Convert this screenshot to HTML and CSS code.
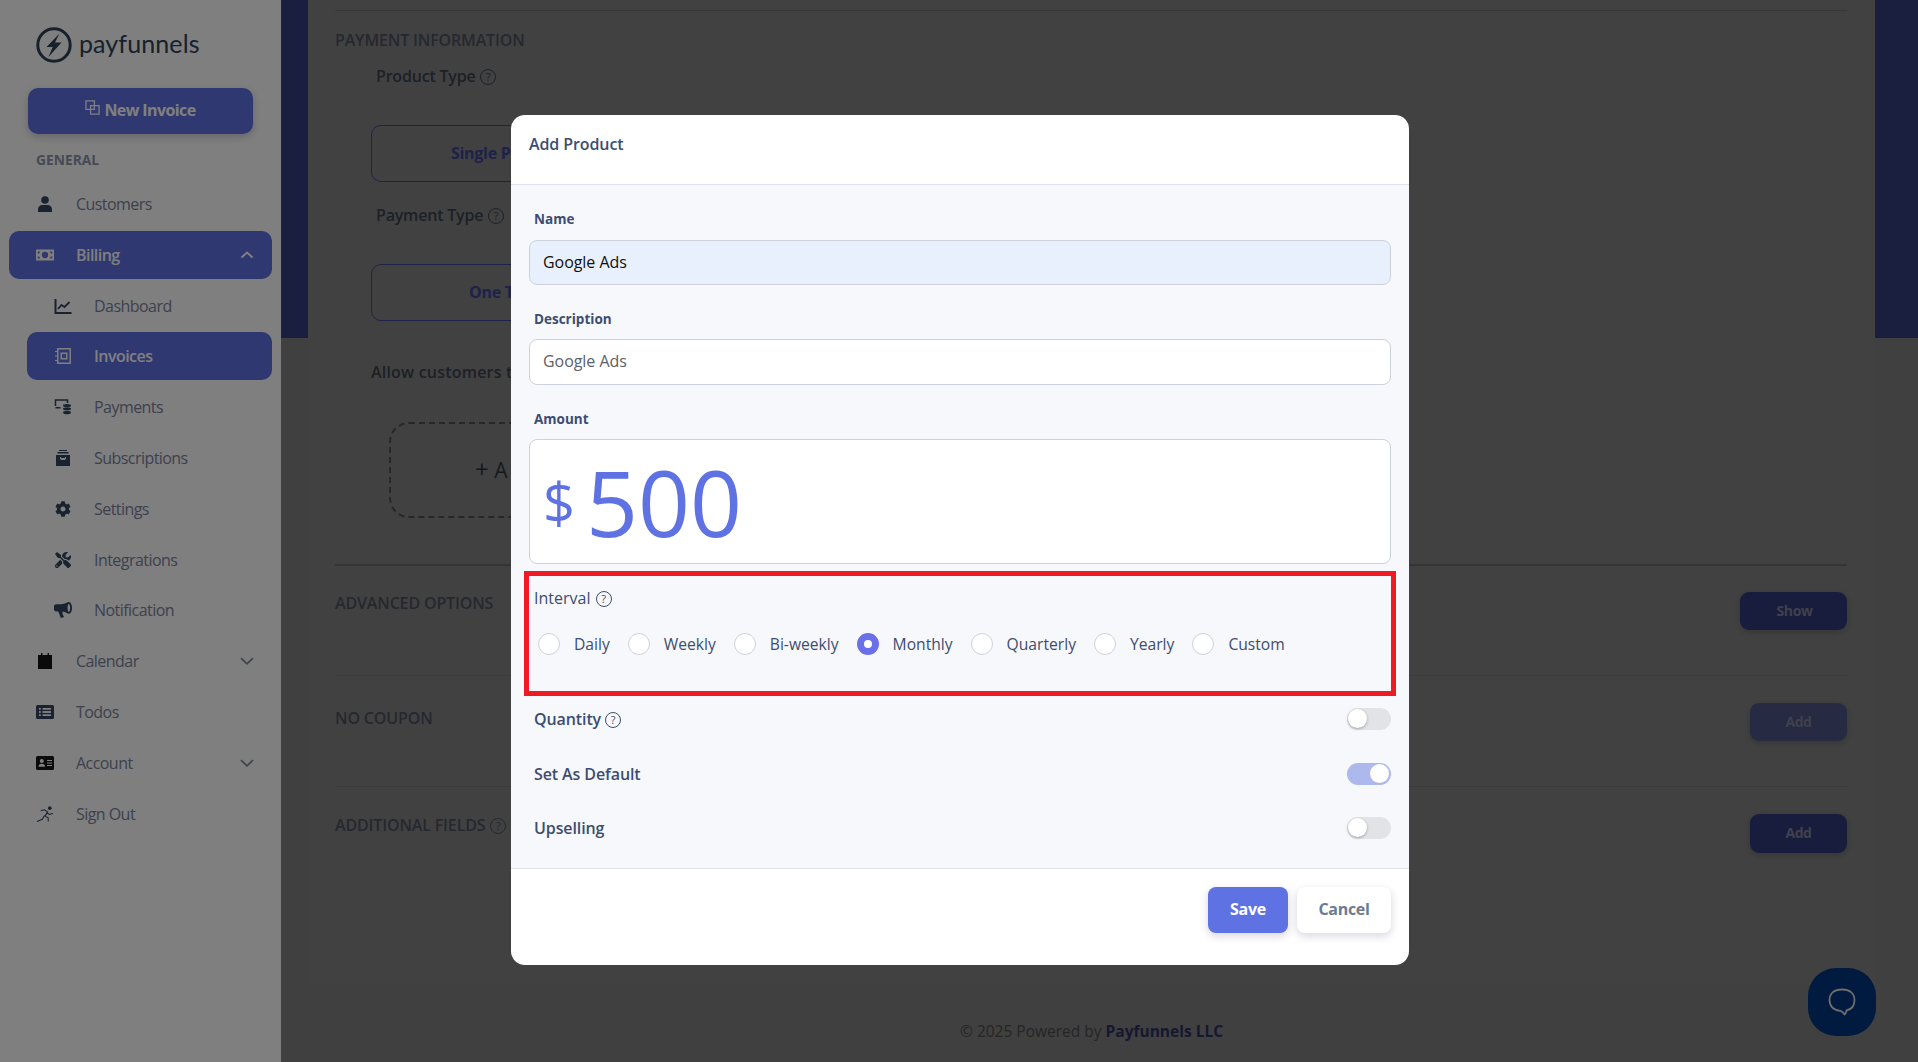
FILE: index.html
```html
<!DOCTYPE html>
<html lang="en">
<head>
    <meta charset="UTF-8">
    <title>Payfunnels - New Invoice</title>
    <link rel="stylesheet" href="styles.css">
</head>
<body>
<div class="page">
    <!-- left menu -->
    <aside class="sidebar">
        <div class="logo">
            <svg class="logo-mark" viewBox="0 0 36 36"><circle cx="18" cy="18" r="16.2" fill="none" stroke="#2c4258" stroke-width="3"/><path d="M23.5 6.5 10.5 20h6.2l-4.2 10 13-14.5h-6.5z" fill="#2c4258"/></svg>
            <span>payfunnels</span>
        </div>
        <button type="button" class="new-btn">
            <svg viewBox="0 0 16 16"><path d="M1 1h9v9H1zM6 6h9v9H6z" fill="none" stroke="#fff" stroke-width="1.4"/></svg>
            New Invoice
        </button>
        <div class="nav-title">GENERAL</div>
        <ul class="nav">
            <li class="nav-item">
                <svg class="ico" viewBox="0 0 16 16"><circle cx="8" cy="4" r="3.8"/><path d="M1 16v-2.5C1 10.500 3 9 5 9h6c2 0 4 1.500 4 4.500V16z"/></svg>
                <span>Customers</span>
            </li>
            <li class="nav-item active">
                <svg class="ico" viewBox="0 0 20 14"><path fill-rule="evenodd" d="M0 1h20v12H0zM10 3.500a3.500 3.500 0 1 0 0 7 3.500 3.500 0 0 0 0-7zM2 3v2.500A2.500 2.500 0 0 0 4.500 3zM2 11h2.500A2.500 2.500 0 0 0 2 8.500zM18 3h-2.500A2.500 2.500 0 0 0 18 5.500zM18 11V8.500A2.500 2.500 0 0 0 15.500 11z" fill="#fff"/></svg>
                <span>Billing</span>
                <svg class="chev" viewBox="0 0 14 8"><path d="M1.500 6.500 7 1.500l5.500 5" fill="none" stroke="#fff" stroke-width="2"/></svg>
            </li>
            <li class="nav-item sub">
                <svg class="ico" viewBox="0 0 17 16"><path d="M1 1v14h16" fill="none" stroke="#33465f" stroke-width="2"/><path d="M3.500 11 7 7l3 2 5-5" fill="none" stroke="#33465f" stroke-width="1.800"/></svg>
                <span>Dashboard</span>
            </li>
            <li class="nav-item sub active">
                <svg class="ico" viewBox="0 0 16 16"><path fill-rule="evenodd" d="M2 0h14v16H2zM3.500 1.500v13h11v-13zM5.500 4.500h7v7h-7zM7 6v4h4V6z" fill="#fff"/><path d="M0 3h3v1H0zM0 7.500h3v1H0zM0 12h3v1H0z" fill="#fff"/></svg>
                <span>Invoices</span>
            </li>
            <li class="nav-item sub">
                <svg class="ico" viewBox="0 0 17 16"><path d="M1 7V1h12v3" fill="none" stroke="#33465f" stroke-width="1.500"/><path d="M1 8h5v1.500H1z"/><ellipse cx="12.500" cy="6.500" rx="4" ry="1.500"/><ellipse cx="12.500" cy="9.800" rx="4" ry="1.500"/><ellipse cx="12.500" cy="13.500" rx="4" ry="1.800"/></svg>
                <span>Payments</span>
            </li>
            <li class="nav-item sub">
                <svg class="ico" viewBox="0 0 14 16"><path fill-rule="evenodd" d="M3 0h8v1H3zM1.500 2h11v1.500h-11zM0 5h14v11H0zM4 7v1.500L5 10h4l1-1.500V7H9v1H5V7z"/></svg>
                <span>Subscriptions</span>
            </li>
            <li class="nav-item sub">
                <svg class="ico" viewBox="0 0 512 512"><path d="M487.400 315.700l-42.600-24.600c4.300-23.200 4.300-47 0-70.200l42.600-24.600c4.900-2.800 7.100-8.600 5.500-14-11.100-35.600-30-67.800-54.700-94.600-3.800-4.100-10-5.100-14.800-2.300L380.800 110c-17.900-15.400-38.500-27.300-60.800-35.100V25.800c0-5.600-3.900-10.500-9.400-11.700-36.700-8.200-74.300-7.800-109.200 0-5.500 1.200-9.400 6.100-9.400 11.700V75c-22.200 7.900-42.800 19.800-60.800 35.100L88.700 85.500c-4.900-2.800-11-1.900-14.800 2.300-24.700 26.700-43.600 58.900-54.700 94.600-1.700 5.400.6 11.200 5.500 14L67.300 221c-4.300 23.200-4.300 47 0 70.200l-42.600 24.600c-4.900 2.800-7.100 8.600-5.500 14 11.100 35.600 30 67.800 54.700 94.600 3.800 4.100 10 5.100 14.800 2.300l42.600-24.600c17.900 15.400 38.500 27.300 60.800 35.100v49.200c0 5.600 3.900 10.500 9.400 11.700 36.700 8.200 74.300 7.800 109.200 0 5.500-1.200 9.400-6.100 9.400-11.700v-49.200c22.200-7.900 42.800-19.800 60.800-35.100l42.600 24.600c4.900 2.800 11 1.900 14.800-2.300 24.700-26.700 43.600-58.900 54.700-94.600 1.500-5.500-.7-11.300-5.600-14.100zM256 336c-44.100 0-80-35.900-80-80s35.900-80 80-80 80 35.900 80 80-35.900 80-80 80z"/></svg>
                <span>Settings</span>
            </li>
            <li class="nav-item sub">
                <svg class="ico" viewBox="0 0 512 512"><path d="M501.100 395.700L384 278.600c-23.100-23.100-57.600-27.600-85.400-13.900L192 158.100V96L64 0 0 64l96 128h62.100l106.600 106.600c-13.600 27.800-9.200 62.300 13.900 85.400l117.100 117.100c14.600 14.600 38.200 14.600 52.700 0l52.700-52.700c14.500-14.600 14.500-38.200 0-52.700zM331.700 225c28.300 0 54.900 11 74.900 31l19.400 19.400c15.800-6.900 30.800-16.500 43.800-29.500 37.100-37.100 49.700-89.300 37.900-136.700-2.200-9-13.500-12.100-20.100-5.500l-74.400 74.400-67.900-11.300L334 98.900l74.400-74.400c6.600-6.600 3.400-17.900-5.700-20.200-47.400-11.700-99.600.9-136.600 37.900-28.500 28.500-41.900 66.100-41.200 103.600l82.100 82.100c8.100-1.900 16.500-2.900 24.700-2.900zm-103.900 82l-56.700-56.700L18.700 402.800c-25 25-25 65.500 0 90.500s65.500 25 90.500 0l123.600-123.600c-7.600-19.900-9.900-41.600-5-62.700zM64 472c-13.200 0-24-10.800-24-24 0-13.300 10.700-24 24-24s24 10.700 24 24c0 13.200-10.700 24-24 24z"/></svg>
                <span>Integrations</span>
            </li>
            <li class="nav-item sub">
                <svg class="ico" viewBox="0 0 17 15"><path fill-rule="evenodd" d="M14 0c1.800 0 3 2.700 3 5.500S15.800 11 14 11c-1.200 0-3-1.800-6-2.200V11L9.500 14l-3 1L4 9H3a3 3 0 0 1 0-7h4c3.500 0 5.800-2 7-2zM14 1.800c-.7 0-1.200 1.600-1.200 3.700s.5 3.700 1.200 3.700 1.200-1.600 1.200-3.700S14.700 1.800 14 1.800z"/></svg>
                <span>Notification</span>
            </li>
            <li class="nav-item">
                <svg class="ico dark" viewBox="0 0 14 16"><path d="M3 0h1.500v2h5V0H11v2h3v14H0V2h3z"/></svg>
                <span>Calendar</span>
                <svg class="chev" viewBox="0 0 14 8"><path d="M1 1.200 7 6.800l6-5.600" fill="none" stroke="#7a8299" stroke-width="1.600"/></svg>
            </li>
            <li class="nav-item">
                <svg class="ico" viewBox="0 0 18 14"><path fill-rule="evenodd" d="M1.500 0h15A1.500 1.500 0 0 1 18 1.500v11a1.500 1.500 0 0 1-1.500 1.500h-15A1.500 1.500 0 0 1 0 12.500v-11A1.500 1.500 0 0 1 1.500 0zM3 3v1.800h1.800V3zM6.500 3v1.800H15V3zM3 6.100v1.800h1.800V6.100zM6.500 6.100v1.800H15V6.100zM3 9.200V11h1.800V9.200zM6.500 9.200V11H15V9.200z"/></svg>
                <span>Todos</span>
            </li>
            <li class="nav-item">
                <svg class="ico dark" viewBox="0 0 18 14"><path fill-rule="evenodd" d="M1.500 0h15A1.500 1.500 0 0 1 18 1.500v11a1.500 1.500 0 0 1-1.500 1.500h-15A1.500 1.500 0 0 1 0 12.500v-11A1.500 1.500 0 0 1 1.500 0zM5.800 3a2 2 0 1 0 0 4 2 2 0 0 0 0-4zM2.500 10.800h6.600c0-1.800-1.200-3-3.300-3s-3.300 1.200-3.300 3zM11 4v1.100h5V4zM11 6.500v1.100h5V6.500zM11 9v1.100h5V9z"/></svg>
                <span>Account</span>
                <svg class="chev" viewBox="0 0 14 8"><path d="M1 1.200 7 6.800l6-5.600" fill="none" stroke="#7a8299" stroke-width="1.600"/></svg>
            </li>
            <li class="nav-item">
                <svg class="ico" viewBox="0 0 16 15"><circle cx="12.500" cy="2" r="1.700"/><path d="M4 4.500 7.500 3.500 10.500 5.500 8 9.500l3 1.500v3.500M10 6.500l2 1.500 3.500-1M7.500 9 5.500 12.500.5 14.500" fill="none" stroke="#33465f" stroke-width="1"/></svg>
                <span>Sign Out</span>
            </li>
        </ul>
    </aside>

    <!-- page behind the popup, only what shows beside it -->
    <main class="main">
        <div class="card">
            <section class="pay-info">
                <h3 class="sec-title">PAYMENT INFORMATION</h3>
                <div class="inner">
                    <div class="field-name">Product Type <i class="help">?</i></div>
                    <div class="type-btn single">Single Pr</div>
                    <div class="field-name second">Payment Type <i class="help">?</i></div>
                    <div class="type-btn once">One T</div>
                    <div class="allow">Allow customers to</div>
                    <div class="dash-box"><span class="plus">+</span> A</div>
                </div>
            </section>
            <section class="row-sec thick">
                <h3 class="sec-title">ADVANCED OPTIONS</h3>
                <button type="button" class="sec-btn wide">Show</button>
            </section>
            <section class="row-sec">
                <h3 class="sec-title low">NO COUPON</h3>
                <button type="button" class="sec-btn off">Add</button>
            </section>
            <section class="row-sec last">
                <h3 class="sec-title">ADDITIONAL FIELDS <i class="help">?</i></h3>
                <button type="button" class="sec-btn tall">Add</button>
            </section>
        </div>
        <footer class="copy">© 2025 Powered by <b>Payfunnels LLC</b></footer>
    </main>
</div>

<div class="overlay">
    <div class="modal">
        <div class="modal-head">Add Product</div>
        <div class="modal-body">
            <label class="lbl first">Name</label>
            <input type="text" class="txt filled" value="Google Ads">
            <label class="lbl">Description</label>
            <input type="text" class="txt desc" value="Google Ads">
            <label class="lbl">Amount</label>
            <div class="amount"><span class="cur">$</span><span class="num">500</span></div>

            <div class="interval-name">Interval <i class="help">?</i></div>
            <div class="radios">
                <div class="radio"><i></i>Daily</div>
                <div class="radio"><i></i>Weekly</div>
                <div class="radio"><i></i>Bi-weekly</div>
                <div class="radio on"><i></i>Monthly</div>
                <div class="radio"><i></i>Quarterly</div>
                <div class="radio"><i></i>Yearly</div>
                <div class="radio"><i></i>Custom</div>
            </div>

            <div class="opt first"><span>Quantity <i class="help">?</i></span><b class="toggle"></b></div>
            <div class="opt"><span>Set As Default</span><b class="toggle on"></b></div>
            <div class="opt last"><span>Upselling</span><b class="toggle"></b></div>

            <!-- red marker from the screenshot -->
            <div class="marker"></div>
        </div>
        <div class="modal-foot">
            <button type="button" class="save">Save</button>
            <button type="button" class="cancel">Cancel</button>
        </div>
    </div>
    <div class="chat">
        <svg viewBox="0 0 30 30"><path d="M15 2.500c7.500 0 12.500 3.500 12.500 10.500 0 6-3.500 9.500-8 10.500-.3 1.500-.8 2.800-1.800 4-1.200-1.500-2.500-2.800-4.200-3.700C7 23.500 2.500 19.500 2.500 13 2.500 6 7.500 2.500 15 2.500z" fill="none" stroke="#6e6e6e" stroke-width="1.800" stroke-linejoin="round"/></svg>
    </div>
</div>
</body>
</html>
```

FILE: styles.css
```css
* {
    box-sizing: border-box;
}
html, body {
    margin: 0;
    height: 100%;
    overflow: hidden;
}
body {
    font-family: "Open Sans", "Liberation Sans", sans-serif;
    font-size: 16px;
    position: relative;
}
button {
    font-family: inherit;
    border: 0;
}
h3 {
    margin: 0;
}
.page {
    display: flex;
    height: 1062px;
}

/* sidebar */
.sidebar {
    width: 281px;
    flex: none;
    background: #fff;
    padding: 27px 9px 0;
}
.logo {
    display: flex;
    align-items: center;
    gap: 7px;
    height: 36px;
    margin-left: 27px;
}
.logo-mark {
    width: 36px;
    height: 36px;
}
.logo span {
    font-family: "Lato", sans-serif;
    font-size: 25px;
    color: #2c4258;
    letter-spacing: .1px;
    line-height: 32px;
    padding-bottom: 4px;
}
.new-btn {
    display: flex;
    align-items: center;
    justify-content: center;
    gap: 4px;
    width: 225px;
    height: 46px;
    margin: 25px 0 0 19px;
    padding: 0 0 2px;
    background: #5e70e0;
    border-radius: 10px;
    color: #fff;
    font-size: 16px;
    font-weight: 700;
    letter-spacing: -.6px;
    box-shadow: 0 3px 8px rgba(50, 50, 93, .25);
}
.new-btn svg {
    width: 15px;
    height: 15px;
    margin-top: -6px;
}
.nav-title {
    margin: 17px 0 0 27px;
    height: 18px;
    font-size: 13.800px;
    line-height: 18px;
    font-weight: 700;
    color: #8c95a8;
}
.nav {
    list-style: none;
    margin: 11px 0 0;
    padding: 0;
}
.nav-item {
    display: flex;
    align-items: center;
    height: 48px;
    margin-bottom: 2.800px;
    padding: 0 18px 0 27px;
    border-radius: 10px;
    color: #7a8299;
    font-size: 16px;
    letter-spacing: -.55px;
}
.nav-item span {
    flex: 1;
}
.nav-item .ico {
    width: 18px;
    height: 16px;
    margin-right: 22px;
    fill: #33465f;
    flex: none;
}
.nav-item .ico.dark {
    fill: #161616;
}
.nav-item.active {
    background: #5e70e0;
    color: #fff;
    font-weight: 600;
}
.nav-item.sub {
    margin-left: 18px;
}
.chev {
    width: 14px;
    height: 8px;
}

/* page behind popup */
.main {
    flex: 1;
    display: flex;
    flex-direction: column;
    background: linear-gradient(#343e80 338px, #808080 338px);
    padding: 0 43px 0 27px;
}
.card {
    height: 985px;
    background: #838383;
    padding: 10px 28px 0 27px;
}
.pay-info {
    height: 554px;
    border-top: 1px solid #6e6e6e;
    padding-top: 18px;
}
.sec-title {
    font-size: 16px;
    line-height: 22px;
    font-weight: 600;
    letter-spacing: -.15px;
    color: #4a505e;
}
.sec-title.low {
    margin-top: 4px;
}
.inner {
    white-space: nowrap;
    padding: 14px 0 0 36px;
}
.field-name {
    margin-left: 5px;
    line-height: 22px;
    font-weight: 600;
    letter-spacing: -.2px;
    color: #3a404c;
}
.field-name.second {
    margin-top: 22px;
}
.type-btn {
    width: 270px;
    height: 57px;
    margin-top: 38px;
    border: 1px solid #3d4494;
    border-radius: 10px;
    line-height: 55px;
    font-weight: 700;
    letter-spacing: -.3px;
    color: #3d4494;
}
.type-btn.single {
    padding-left: 79px;
}
.type-btn.once {
    padding-left: 97px;
}
.allow {
    margin-top: 40px;
    line-height: 22px;
    font-weight: 600;
    letter-spacing: .2px;
    color: #3a404c;
}
.dash-box {
    width: 290px;
    height: 96px;
    margin: 39px 0 0 18px;
    padding-left: 84px;
    border: 2px dashed #4a4e58;
    border-radius: 20px;
    line-height: 89px;
    font-size: 21px;
    color: #2c303a;
}
.plus {
    font-size: 24px;
}
.row-sec {
    display: flex;
    justify-content: space-between;
    align-items: flex-start;
    height: 111px;
    border-top: 1px solid #747474;
    padding-top: 27px;
}
.row-sec.thick {
    border-top: 2px solid #686868;
    padding-top: 26px;
}
.row-sec.last {
    height: auto;
}
.sec-btn {
    width: 97px;
    height: 38px;
    padding: 0 0 2px;
    border-radius: 9px;
    background: #303a7a;
    color: #7e8298;
    font-size: 14px;
    font-weight: 700;
    letter-spacing: -.4px;
    box-shadow: 0 2px 6px rgba(0, 0, 0, .2);
}
.sec-btn.wide {
    width: 107px;
    padding-left: 2px;
}
.sec-btn.off {
    background: #4c5484;
}
.sec-btn.tall {
    height: 39px;
}
.copy {
    margin-top: 35px;
    line-height: 22px;
    text-align: center;
    font-size: 15.500px;
    color: #4a4a4a;
}
.copy b {
    color: #2a3060;
}

/* help mark */
.help {
    display: inline-block;
    width: 16px;
    height: 16px;
    margin-left: 1px;
    border: 1px solid currentColor;
    border-radius: 50%;
    font-size: 11px;
    font-style: normal;
    font-weight: 400;
    letter-spacing: 0;
    line-height: 14px;
    text-align: center;
    vertical-align: 1px;
}

/* popup */
.overlay {
    position: absolute;
    inset: 0;
    display: flex;
    justify-content: center;
    align-items: flex-start;
    padding: 115px 0 0 2px;
    background: rgba(0, 0, 0, .5);
}
.modal {
    width: 898px;
    height: 850px;
    display: flex;
    flex-direction: column;
    background: #fff;
    border-radius: 14px;
    overflow: hidden;
}
.modal-head {
    height: 70px;
    padding: 18px 18px 0;
    border-bottom: 1px solid #dee2ea;
    font-size: 16px;
    font-weight: 600;
    letter-spacing: -.1px;
    line-height: 22px;
    color: #3c4d72;
}
.modal-body {
    position: relative;
    height: 684px;
    padding: 25px 18px 0;
    background: #f7f8fb;
    border-bottom: 1px solid #dee2ea;
}
.lbl {
    display: block;
    height: 18px;
    margin: 0 0 11px 5px;
    font-size: 13.500px;
    font-weight: 700;
    line-height: 18px;
    color: #3c4d72;
}
.lbl.first {
    margin-bottom: 12px;
}
.txt {
    display: block;
    width: 100%;
    height: 45px;
    margin-bottom: 25px;
    padding: 0 13px 2px;
    font-family: inherit;
    font-size: 16px;
    letter-spacing: -.05px;
    color: #5c6068;
    background: #fff;
    border: 1px solid #cdd2da;
    border-radius: 8px;
    outline: none;
}
.txt.desc {
    height: 46px;
    padding-bottom: 3px;
}
.txt.filled {
    background: #e8f0fe;
    color: #101010;
}
.amount {
    display: flex;
    align-items: center;
    height: 125px;
    padding: 0 13px;
    background: #fff;
    border: 1px solid #cdd2da;
    border-radius: 8px;
    color: #5e72e4;
}
.cur {
    font-size: 56px;
    margin-right: 11px;
}
.num {
    font-size: 91px;
}
.interval-name {
    margin: 23px 0 0 5px;
    line-height: 22px;
    font-weight: 500;
    color: #3c4d72;
}
.radios {
    display: flex;
    gap: 18px;
    margin: 24px 0 0 9px;
}
.radio {
    display: flex;
    align-items: center;
    gap: 14px;
    height: 22px;
    color: #3c4d72;
    font-size: 15.650px;
}
.radio i {
    width: 22px;
    height: 22px;
    border: 1px solid #cdd2da;
    border-radius: 50%;
    background: #fff;
}
.radio.on i {
    background: #fff;
    border: 7px solid #6b6fe8;
}
.opt {
    display: flex;
    justify-content: space-between;
    align-items: center;
    height: 22px;
    margin: 33px 0 0 5px;
    color: #3c4d72;
    font-weight: 600;
    letter-spacing: -.1px;
}
.opt.first {
    margin-top: 53px;
}
.opt.first .help {
    margin-left: 0;
}
.opt.last {
    margin-top: 32px;
}
.toggle {
    position: relative;
    width: 44px;
    height: 22px;
    background: #e1e3e7;
    border-radius: 11px;
}
.toggle::after {
    content: "";
    position: absolute;
    left: 1px;
    top: 1px;
    width: 19px;
    height: 19px;
    background: #fff;
    border-radius: 50%;
    box-shadow: 0 1px 3px rgba(0, 0, 0, .3);
}
.toggle.on {
    background: #adb8ec;
}
.toggle.on::after {
    left: auto;
    right: 2px;
    box-shadow: none;
}
.marker {
    position: absolute;
    left: 13px;
    top: 386px;
    width: 872px;
    height: 125px;
    border: 5px solid #ed1c24;
}
.modal-foot {
    display: flex;
    justify-content: flex-end;
    gap: 9px;
    padding: 18px 18px 0;
}
.save, .cancel {
    height: 46px;
    padding: 0 0 2px;
    border-radius: 8px;
    font-size: 16px;
    font-weight: 700;
    letter-spacing: -.3px;
    box-shadow: 0 3px 8px rgba(50, 50, 93, .2);
}
.save {
    width: 80px;
    background: #5e72e4;
    color: #fff;
}
.cancel {
    width: 94px;
    background: #fff;
    color: #6c7a94;
}
.chat {
    position: absolute;
    right: 42px;
    bottom: 26px;
    display: flex;
    align-items: center;
    justify-content: center;
    width: 68px;
    height: 68px;
    background: #001a40;
    border-radius: 28px;
}
.chat svg {
    width: 30px;
    height: 30px;
}
```
